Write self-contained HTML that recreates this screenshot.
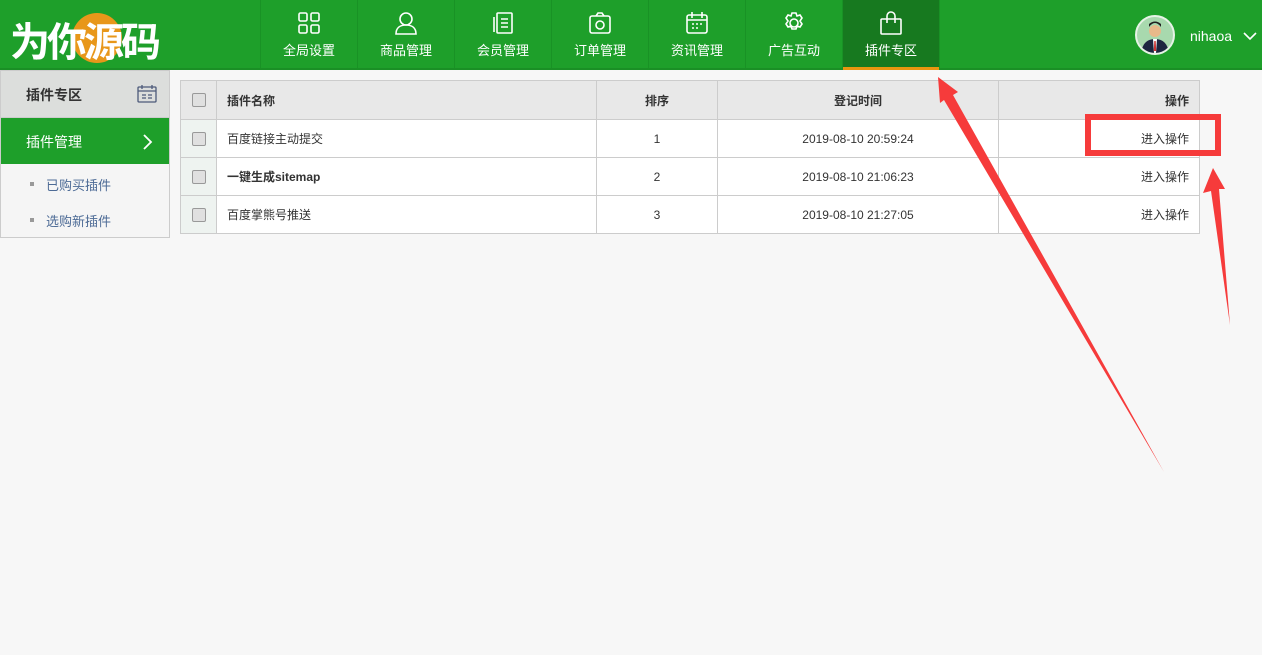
<!DOCTYPE html>
<html><head><meta charset="utf-8"><style>
*{margin:0;padding:0;box-sizing:border-box}
body{width:1262px;height:655px;background:#f7f7f7;font-family:"Liberation Sans","Noto Sans CJK SC",sans-serif;font-size:12px;color:#333;position:relative;overflow:hidden}
.hdr{position:absolute;left:0;top:0;width:1262px;height:70px;background:#1e9f2a;border-bottom:2px solid #1a8f25}
.logo{position:absolute;left:10px;top:10px;font-size:40px;font-weight:bold;color:#fff;letter-spacing:-3px}
.logo .c{position:absolute;left:62px;top:3px;width:50px;height:50px;border-radius:50%;background:#e8971a}
.nav{position:absolute;left:260px;top:0;height:68px;display:flex;border-left:1px solid #199225}
.nav div{width:97px;height:68px;border-right:1px solid #199225;color:#fff;font-size:13px;text-align:center;position:relative}
.nav div svg{position:absolute;left:36px;top:11px}
.nav div span{position:absolute;left:0;right:0;top:40px}
.nav .act{background:#17791f}
.nav .act:after{content:"";position:absolute;left:0;right:0;bottom:-2px;height:3px;background:#e8960f}
.user{position:absolute;left:1135px;top:15px;width:40px;height:40px;border-radius:50%;background:#a8d9ae;border:2px solid #e6f3e6;overflow:hidden}
.uname{position:absolute;left:1190px;top:28px;color:#fff;font-size:14px}
.side{position:absolute;left:0;top:70px;width:170px;height:168px;border:1px solid #ccc;background:#f5f5f5}
.side .t{height:47px;background:#dcdedc;border-bottom:1px solid #ccc;font-size:14px;font-weight:bold;padding:14px 25px;color:#333}
.side .a{height:46px;background:#1e9f2a;color:#fff;font-size:14px;padding:14px 25px}
.side .i{height:36px;padding:11px 0 0 45px;color:#4d6b96;font-size:13px;position:relative}
.side .i:before{content:"";position:absolute;left:29px;top:18px;width:4px;height:4px;background:#999}
table{position:absolute;left:180px;top:80px;border-collapse:collapse;background:#fff}
td{border:1px solid #ccc;height:38px;font-size:12px}
tr:first-child td{background:#e8e8e8;font-weight:bold;height:39px}
td.cb{width:36px;background:#eef3f0;text-align:center}
.box{display:inline-block;width:14px;height:14px;border:1px solid #999;border-radius:2px;background:#e0e0e0;vertical-align:middle}
</style></head><body>
<div class="hdr">
<div class="logo"><div class="c"></div><span style="position:relative">为你源码</span></div>
<div class="nav">
<div><svg width="24" height="24" fill="none" stroke="#fff" stroke-width="1.6"><rect x="2" y="2" width="8" height="8" rx="1.5"/><rect x="14" y="2" width="8" height="8" rx="1.5"/><rect x="2" y="14" width="8" height="8" rx="1.5"/><rect x="14" y="14" width="8" height="8" rx="1.5"/></svg><span>全局设置</span></div>
<div><svg width="24" height="24" fill="none" stroke="#fff" stroke-width="1.6"><circle cx="12" cy="8" r="6"/><path d="M2 23c0-6 4-9 10-9s10 3 10 9z"/></svg><span>商品管理</span></div>
<div><svg width="24" height="24" fill="none" stroke="#fff" stroke-width="1.6"><rect x="6" y="2" width="15" height="20" rx="1"/><path d="M3 6v15M10 8h7M10 12h7M10 16h7"/></svg><span>会员管理</span></div>
<div><svg width="24" height="24" fill="none" stroke="#fff" stroke-width="1.6"><rect x="2" y="5" width="20" height="17" rx="2"/><circle cx="12" cy="14" r="4"/><path d="M8 5l2-3h4l2 3"/></svg><span>订单管理</span></div>
<div><svg width="24" height="24" fill="none" stroke="#fff" stroke-width="1.6"><rect x="2" y="4" width="20" height="18" rx="2"/><path d="M2 9h20M7 1v6M17 1v6M7 13h2M11 13h2M15 13h2M7 17h2M11 17h2"/></svg><span>资讯管理</span></div>
<div><svg width="24" height="24" fill="none" stroke="#fff" stroke-width="1.6"><circle cx="12" cy="12" r="4"/><path d="M10 2h4l1 3 3-1 2 3-2 3 2 3-2 3-3-1-1 3h-4l-1-3-3 1-2-3 2-3-2-3 2-3 3 1z"/></svg><span>广告互动</span></div>
<div class="act"><svg width="24" height="24" fill="none" stroke="#fff" stroke-width="1.6"><rect x="2" y="8" width="20" height="15" rx="1"/><path d="M8 12V5a4 4 0 0 1 8 0v7"/></svg><span>插件专区</span></div>
</div>
<div class="user"><svg width="36" height="36"><circle cx="18" cy="14" r="6" fill="#e8b98a"/><path d="M12 10q6-8 12 0v-3q-6-5-12 0z" fill="#222"/><path d="M4 36q2-14 14-14t14 14z" fill="#1c2540"/><path d="M16 22h4l-1 14h-2z" fill="#fff"/><path d="M17.3 24h1.4l.5 10h-2.4z" fill="#c33"/></svg></div>
<div class="uname">nihaoa <svg width="16" height="10" style="margin-left:6px"><path d="M2 2l6 6 6-6" stroke="#fff" stroke-width="1.6" fill="none"/></svg></div>
</div>
<div class="side">
<div class="t">插件专区<svg width="20" height="20" style="position:absolute;left:136px;top:13px" fill="none" stroke="#4d5a7a" stroke-width="1.3"><rect x="1" y="3" width="18" height="15" rx="1"/><path d="M1 7h18M5 1v4M15 1v4M5 11h4M11 11h4M5 14h4M11 14h4"/></svg></div>
<div class="a">插件管理<svg width="12" height="16" style="position:absolute;left:141px;top:63px"><path d="M2 1l7 7-7 7" stroke="#fff" stroke-width="1.8" fill="none"/></svg></div>
<div class="i">已购买插件</div>
<div class="i">选购新插件</div>
</div>
<table>
<tr><td class="cb" style="background:#e8e8e8"><span class="box"></span></td><td style="width:380px;padding-left:10px">插件名称</td><td style="width:121px;text-align:center">排序</td><td style="width:281px;text-align:center">登记时间</td><td style="width:201px;text-align:right;padding-right:10px">操作</td></tr>
<tr><td class="cb"><span class="box"></span></td><td style="padding-left:10px">百度链接主动提交</td><td style="text-align:center">1</td><td style="text-align:center">2019-08-10 20:59:24</td><td style="text-align:right;padding-right:10px">进入操作</td></tr>
<tr><td class="cb"><span class="box"></span></td><td style="padding-left:10px;font-weight:bold">一键生成sitemap</td><td style="text-align:center">2</td><td style="text-align:center">2019-08-10 21:06:23</td><td style="text-align:right;padding-right:10px">进入操作</td></tr>
<tr><td class="cb"><span class="box"></span></td><td style="padding-left:10px">百度掌熊号推送</td><td style="text-align:center">3</td><td style="text-align:center">2019-08-10 21:27:05</td><td style="text-align:right;padding-right:10px">进入操作</td></tr>
</table>
<svg width="1262" height="655" style="position:absolute;left:0;top:0">
<rect x="1088" y="117" width="130" height="36" fill="none" stroke="#f63b3b" stroke-width="6"/>
<polygon points="938,77 958,92 953,95 1164,472 944,100 940,103" fill="#f63b3b"/>
<polygon points="1213,168 1225,189 1219,189 1230,325 1211,191 1203,193" fill="#f63b3b"/>
</svg>
</body></html>
